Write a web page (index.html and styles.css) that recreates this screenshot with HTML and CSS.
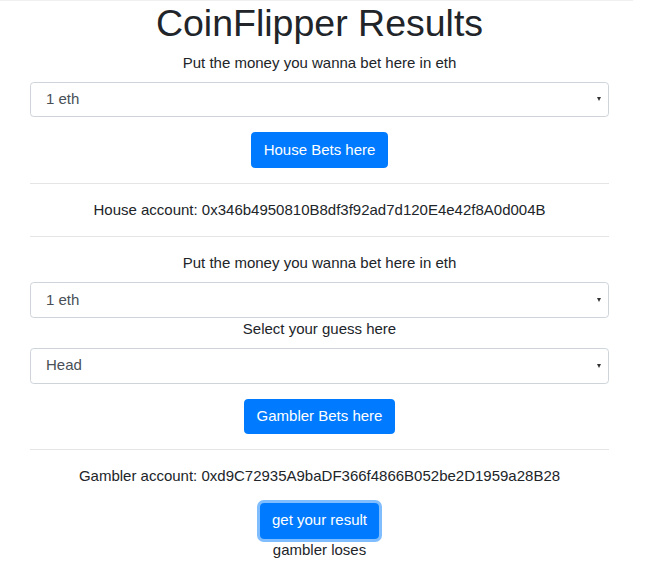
FILE: index.html
```html
<!DOCTYPE html>
<html lang="en">
<head>
<meta charset="utf-8">
<title>CoinFlipper Results</title>
<link rel="stylesheet" href="styles.css">
</head>
<body>
<div class="topline"></div>
<div class="container">
  <h1 class="title">CoinFlipper Results</h1>
  <div class="form-group">
    <label class="label">Put the money you wanna bet here in eth</label>
    <div class="select"><span>1 eth</span><i class="caret"></i></div>
  </div>
  <div class="center"><button class="btn">House Bets here</button></div>
  <hr class="rule">
  <p class="para">House account: 0x346b4950810B8df3f92ad7d120E4e42f8A0d004B</p>
  <hr class="rule">
  <div class="form-group">
    <label class="label">Put the money you wanna bet here in eth</label>
    <div class="select"><span>1 eth</span><i class="caret"></i></div>
    <label class="label">Select your guess here</label>
    <div class="select"><span>Head</span><i class="caret"></i></div>
  </div>
  <div class="center"><button class="btn">Gambler Bets here</button></div>
  <hr class="rule">
  <p class="para">Gambler account: 0xd9C72935A9baDF366f4866B052be2D1959a28B28</p>
  <div class="center"><button class="btn focused">get your result</button></div>
  <div class="result">gambler loses</div>
</div>
</body>
</html>
```

FILE: styles.css
```css
html, body {
  margin: 0;
  padding: 0;
  background: #fff;
}
body {
  font-family: "Liberation Sans", Arial, sans-serif;
  font-size: 15px;
  line-height: 1.5;
  color: #212529;
}
.topline {
  width: 633px;
  height: 1px;
  background: #f0f0f0;
}
.container {
  width: 579px;
  margin-left: 30px;
  text-align: center;
}
.title {
  margin: -0.5px 0 6px;
  font-size: 37.5px;
  font-weight: 400;
  line-height: 1.2;
}
.form-group {
  margin-bottom: 15px;
}
.label {
  display: inline-block;
  margin-bottom: 7.5px;
}
.select {
  display: flex;
  align-items: center;
  justify-content: space-between;
  box-sizing: border-box;
  height: 35.6px;
  padding: 0 7px 0 15px;
  border: 1px solid #ced4da;
  border-radius: 3.75px;
  color: #495057;
  text-align: left;
  background: #fff;
}
.caret {
  width: 0;
  height: 0;
  border-left: 2.5px solid transparent;
  border-right: 2.5px solid transparent;
  border-top: 4px solid #333;
}
.center {
  display: flex;
  justify-content: center;
}
.btn {
  font-family: inherit;
  font-size: 15px;
  line-height: 22.5px;
  padding: 5.625px 11.25px;
  color: #fff;
  background: #007bff;
  border: 1px solid #007bff;
  border-radius: 3.75px;
  cursor: pointer;
}
.btn.focused {
  box-shadow: 0 0 0 3px rgba(0, 123, 255, 0.5);
}
.rule {
  margin: 15px 0;
  border: 0;
  border-top: 1px solid rgba(0, 0, 0, 0.1);
}
.para {
  margin: 0 0 15px;
}
.result {
  margin: 0;
}
```
